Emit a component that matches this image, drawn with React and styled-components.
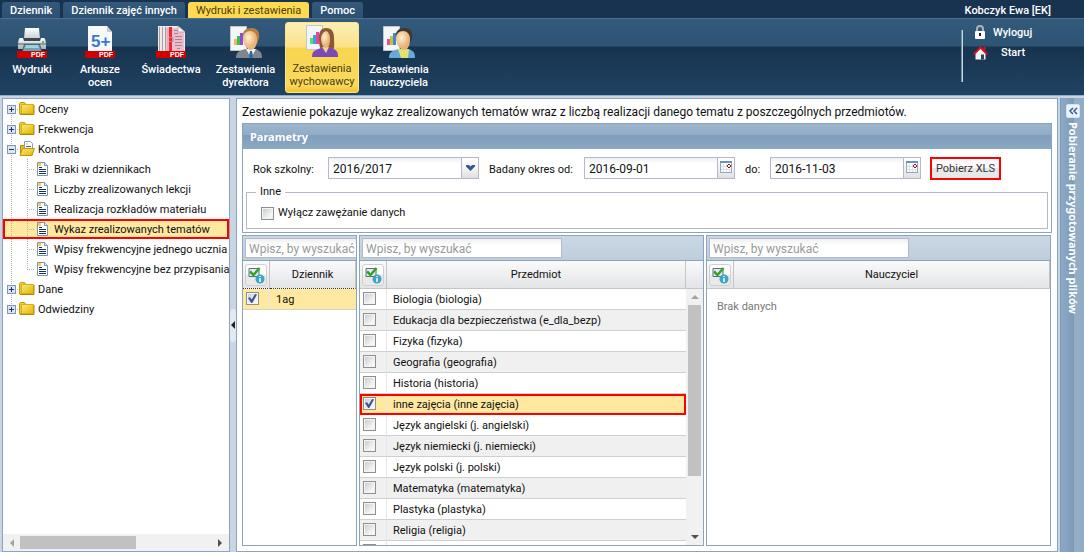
import React, { useState } from "react";
import styled, { createGlobalStyle, css } from "styled-components";

const GlobalStyle = createGlobalStyle`
  * { box-sizing: border-box; }
  body {
    margin: 0;
    background: #c9d5e3;
    color: #111;
    font: 11px/14px Tahoma, Roboto, "Noto Sans", sans-serif;
  }
  input, select, button { font: inherit; color: inherit; margin: 0; }
`;

const line = "#8ba4bf";
const selected = "#ffe8a0";
const titleFont = `Tahoma, "Noto Sans", sans-serif`;

const Page = styled.div`
  height: 100vh;
  display: flex;
  flex-direction: column;
`;

/* ---------- top bar ---------- */

const Header = styled.header`
  flex: none;
  background: #18334f;
  border-bottom: 1px solid #93abc3;
  color: #fff;
`;

const TopStrip = styled.div`
  height: 19px;
  display: flex;
  justify-content: space-between;
  align-items: flex-end;
  padding: 0 33px 0 2px;
  border-bottom: 1px solid #4d6f8d;
`;

const Tabs = styled.nav`
  display: flex;
  gap: 3px;
`;

const Tab = styled.button`
  height: 16px;
  padding: 1px 8px 0;
  border: 0;
  border-radius: 3px 3px 0 0;
  line-height: 15px;
  font-weight: ${(p) => (p.$active ? 400 : 500)};
  white-space: nowrap;
  background: ${(p) => (p.$active ? "#ffd94f" : "linear-gradient(#35597a, #2c5171)")};
  color: ${(p) => (p.$active ? "#4a3c10" : "#fff")};
`;

const User = styled.span`
  line-height: 15px;
  font-weight: 500;
`;

const Ribbon = styled.div`
  height: 76px;
  display: flex;
  justify-content: space-between;
  background: linear-gradient(#33597b 0, #2e5474 27px, #17334e 28px, #1f4363 76px);
`;

const Tools = styled.div`
  display: flex;
  gap: 4px;
  padding-top: 3px;
`;

const Tool = styled.button`
  width: ${(p) => p.$width}px;
  height: 71px;
  padding: 3px 0 0;
  border: 1px solid transparent;
  border-radius: 3px;
  background: none;
  display: flex;
  flex-direction: column;
  align-items: center;
  gap: 5px;
  font-weight: 500;
  line-height: 13px;
  white-space: pre-line;
  ${(p) =>
    p.$active &&
    css`
      padding-top: 2px;
      font-weight: 400;
      color: #4a3c10;
      border-color: #ffe48c;
      background: linear-gradient(#fbeeb4 0, #fbe28a 24px, #f8d54e 25px, #f9d95f 62px, #eebf1c 71px);
    `}
`;

const Session = styled.div`
  width: 123px;
  display: flex;
  align-items: flex-start;
  gap: 10px;
  padding-top: 4px;
`;

const Divider = styled.span`
  width: 2px;
  height: 52px;
  margin-top: 7px;
  background: linear-gradient(90deg, #7390a9 50%, #c6d4e0 50%);
`;

const SessionLinks = styled.div`
  display: flex;
  flex-direction: column;
`;

const SessionLink = styled.a`
  display: flex;
  align-items: center;
  gap: 6px;
  height: 20px;
  color: #fff;
  font-weight: 500;
  text-decoration: none;
  & + & { gap: 13px; }
`;

/* ---------- frame ---------- */

const Body = styled.div`
  flex: 1;
  min-height: 0;
  display: grid;
  grid-template-columns: 228px 6px minmax(0, 1fr) 26px;
  padding: 2px 0 0 2px;
`;

const Sidebar = styled.aside`
  display: flex;
  flex-direction: column;
  min-height: 0;
  overflow: hidden;
  background: #fff;
  border: 1px solid ${line};
`;

const Splitter = styled.div`
  display: flex;
  align-items: center;
`;

const Collapse = styled.button`
  width: 6px;
  height: 33px;
  padding: 0;
  border: 0;
  border-radius: 3px;
  background: #e2e9f1;
  display: flex;
  align-items: center;
  justify-content: center;
`;

const Main = styled.main`
  display: flex;
  flex-direction: column;
  min-height: 0;
  overflow: hidden;
  background: #fff;
  border: 1px solid ${line};
  padding: 5px;
`;

const Drawer = styled.aside`
  margin-left: 2px;
  display: flex;
  flex-direction: column;
  align-items: center;
  gap: 4px;
  padding-top: 6px;
  border-left: 1px solid #7f9dba;
  background: linear-gradient(90deg, #8ca9c4 0, #7d9bb9 13px, #95aec6 13px, #92acc5 100%);
`;

const DrawerButton = styled.button`
  width: 14px;
  height: 14px;
  padding: 0;
  border: 1px solid #d4e3f4;
  border-radius: 2px;
  background: #eaf2fb;
  display: flex;
  align-items: center;
  justify-content: center;
`;

const DrawerTitle = styled.span`
  writing-mode: vertical-rl;
  color: #fff;
  font-family: ${titleFont};
  font-weight: 700;
  white-space: nowrap;
`;

/* ---------- tree ---------- */

const Tree = styled.ul`
  flex: 1;
  min-height: 0;
  overflow: hidden;
  list-style: none;
  margin: 0;
  padding: 0;
`;

const TreeRow = styled.li`
  height: 20px;
  display: flex;
  align-items: center;
  white-space: nowrap;
  overflow: hidden;
  svg { flex: none; }
  ${(p) =>
    p.$selected &&
    css`
      background: ${selected};
      outline: 2px solid #f00;
      outline-offset: -2px;
    `}
`;

const TreeLabel = styled.span`
  padding: 2px 0 0 3px;
`;

/* ---------- scroll bars ---------- */

const HScroll = styled.div`
  flex: none;
  height: 17px;
  padding: 2px 6px;
  display: flex;
  align-items: stretch;
  background: #f1f1f1;
  svg { align-self: center; }
`;

const HTrack = styled.div`
  flex: 1;
  padding: 0 0 0 5px;
`;

const HThumb = styled.div`
  width: 59%;
  height: 13px;
  background: #c1c1c1;
`;

const VScroll = styled.div`
  flex: 1;
  min-height: 0;
  display: flex;
  flex-direction: column;
  align-items: center;
  padding: 4px 2px;
  background: #f1f1f1;
`;

const VTrack = styled.div`
  flex: 1;
  align-self: stretch;
  padding-top: 4px;
`;

const VThumb = styled.div`
  height: 75%;
  background: #c1c1c1;
`;

/* ---------- parameters ---------- */

const Intro = styled.p`
  flex: none;
  margin: 0;
  height: 19px;
  font-size: 12px;
  line-height: 16px;
  white-space: nowrap;
`;

const Panel = styled.section`
  flex: none;
  border: 1px solid ${line};
  background: #fff;
`;

const PanelTitle = styled.h2`
  margin: 0;
  height: 25px;
  padding-left: 7px;
  font-family: ${titleFont};
  font-size: 11px;
  line-height: 25px;
  font-weight: 700;
  color: #fff;
  background: linear-gradient(#9cb5cd 0, #91acc7 11px, #7f9dbb 11px, #8ba8c4 100%);
`;

const FormRow = styled.div`
  display: flex;
  padding: 8px 0 0 9px;
  height: 38px;
`;

const Label = styled.label`
  width: ${(p) => p.$width}px;
  padding-left: 1px;
  line-height: 26px;
  white-space: nowrap;
`;

const Field = styled.span`
  width: 151px;
  height: 22px;
  margin-right: 9px;
  display: flex;
  border: 1px solid #b5b8c8;
  background: linear-gradient(#eef0f1, #fff 6px);
`;

const control = css`
  flex: 1;
  min-width: 0;
  padding: 1px 4px 0;
  border: 0;
  border-radius: 0;
  outline: 0;
  background: none;
  font-size: 12px;
`;

const Select = styled.select`
  ${control}
  appearance: none;
`;

const DateInput = styled.input`
  ${control}
`;

const Trigger = styled.span`
  width: 17px;
  border-left: 1px solid #b5b8c8;
  background: linear-gradient(#fff 0, #f4f4f4 50%, #e0e0e2 100%);
  display: flex;
  align-items: center;
  justify-content: center;
`;

const TriggerButton = styled(Trigger).attrs({ as: "button", type: "button" })`
  align-items: flex-start;
  padding: 3px 0 0;
  border-width: 0 0 0 1px;
`;

const ExportButton = styled.button`
  width: 71px;
  height: 23px;
  padding: 0;
  border: 2px solid #f00;
  background: linear-gradient(#fafafa 45%, #e6e6e6 50%, #e9e9e9);
  color: #333;
  white-space: nowrap;
`;

const Fieldset = styled.fieldset`
  margin: -2px 3px 3px;
  padding: 6px 14px 7px;
  min-width: 0;
  border: 1px solid #b5b8c8;
`;

const Legend = styled.legend`
  margin-left: -5px;
  padding: 0 4px;
`;

const CheckLabel = styled.label`
  display: flex;
  align-items: center;
  gap: 4px;
  line-height: 16px;
`;

const Check = styled.input.attrs({ type: "checkbox" })`
  appearance: none;
  display: block;
  flex: none;
  width: 13px;
  height: 13px;
  border: 1px solid #8e8f8f;
  background: linear-gradient(135deg, #c9cfd5, #f6f6f6 80%) content-box;
  padding: 1px;
  box-shadow: inset 0 0 0 1px #f4f4f4;
  &:checked::before {
    content: "";
    display: block;
    width: 9px;
    height: 9px;
    background: #3c5297;
    clip-path: polygon(0 44%, 22% 36%, 42% 62%, 78% 0, 100% 6%, 48% 100%, 36% 100%);
  }
`;

/* ---------- lists ---------- */

const Lists = styled.div`
  flex: 1;
  min-height: 0;
  margin: 2px 1px 0 0;
  display: grid;
  grid-template-columns: 115px minmax(0, 1fr) minmax(0, 1fr);
  gap: 2px;
`;

const ListPanel = styled.section`
  min-height: 0;
  min-width: 0;
  display: flex;
  flex-direction: column;
  overflow: hidden;
  border: 1px solid ${line};
  background: #fff;
`;

const SearchBar = styled.div`
  flex: none;
  height: 25px;
  padding: 2px;
  overflow: hidden;
  border-bottom: 1px solid ${line};
  background: linear-gradient(#cbd7e4, #bfcedd);
`;

const Search = styled.input`
  display: block;
  width: 200px;
  height: 20px;
  padding: 1px 3px 0;
  border: 1px solid #b5b8c8;
  background: linear-gradient(#eef0f1, #fff 6px);
  font-size: 12px;
  &::placeholder { color: #999; }
`;

const ListBody = styled.div`
  flex: 1;
  min-height: 0;
  display: flex;
  overflow: hidden;
`;

const TableWrap = styled.div`
  flex: 1;
  min-width: 0;
  overflow: hidden;
`;

const Table = styled.table`
  width: 100%;
  table-layout: fixed;
  border-collapse: separate;
  border-spacing: 0;
`;

const headFill = css`
  height: 28px;
  border-bottom: 1px solid #c5c5c5;
  background: linear-gradient(#fafafa, #e3e4e6);
`;

const Th = styled.th`
  ${headFill}
  padding: 0;
  width: ${(p) => (p.$narrow ? "27px" : "auto")};
  border-right: 1px solid #c5c5c5;
  ${(p) => p.$focused && "border-bottom: 1px dotted #333;"}
  font-weight: 400;
  text-align: center;
`;

const ToggleAll = styled.button`
  display: block;
  width: 22px;
  height: 22px;
  margin: 0 auto;
  padding: 1px;
  border: 1px solid #d0d0d0;
  border-radius: 3px;
  background: linear-gradient(#fff 45%, #e9e9e9 50%);
`;

const Row = styled.tr`
  background: ${(p) => (p.$selected ? selected : p.$odd ? "#f0f0f0" : "#fff")};
  ${(p) =>
    p.$marked &&
    css`
      outline: 2px solid #f00;
      outline-offset: -2px;
    `}
`;

const Td = styled.td`
  height: 21px;
  padding: 2px 6px 0;
  border-bottom: 1px solid #d0d0d0;
  white-space: nowrap;
  overflow: hidden;
`;

const CheckCell = styled(Td)`
  padding: 0 3px 1px;
  border-right: 1px solid #e6e6e6;
`;

const ScrollSide = styled.div`
  flex: none;
  width: 17px;
  display: flex;
  flex-direction: column;
`;

const HeadCap = styled.div`
  ${headFill}
  flex: none;
`;

const Empty = styled.p`
  margin: 0;
  padding: 11px 10px;
  color: #777;
`;

/* ---------- drawings ---------- */

const PdfBand = () => (
  <g>
    <rect x="1" y="25" width="30" height="7" fill="#d00000" shapeRendering="crispEdges" />
    <text x="15" y="31" fontSize="7" fontWeight="700" fill="#fff" fontFamily="Liberation Sans, sans-serif">PDF</text>
  </g>
);

const PrinterIcon = () => (
  <svg width="32" height="32" viewBox="0 0 32 32">
    <defs>
      <linearGradient id="prn" x1="0" y1="0" x2="0" y2="1">
        <stop offset="0" stopColor="#ffffff" />
        <stop offset="1" stopColor="#a3b0ba" />
      </linearGradient>
      <linearGradient id="prn-paper" x1="0" y1="0" x2="0" y2="1">
        <stop offset="0" stopColor="#ffffff" />
        <stop offset="1" stopColor="#c9cfd3" />
      </linearGradient>
    </defs>
    <path d="M9 2h14l1 11H8z" fill="url(#prn-paper)" />
    <path d="M3 13q0-1 2-1h22q2 0 2 1l1 4v6H2v-6z" fill="url(#prn)" />
    <path d="M7 12h18l-1 3H8z" fill="#3d474f" />
    <path d="M2 17h28v2H2z" fill="#8d9aa4" />
    <path d="M8 18h16l2 7H6z" fill="#57656f" />
    <path d="M9 19h14l2 6H7z" fill="#62a9bb" />
    <path d="M10 19h12l1 3H9z" fill="#9fd3de" />
    <rect x="26" y="15" width="2" height="2" fill="#54c052" />
    <PdfBand />
  </svg>
);

const SheetIcon = () => (
  <svg width="32" height="32" viewBox="0 0 32 32">
    <path d="M4 0h19l5 6v26H4z" fill="#f7f8f9" />
    <path d="M23 0v6h5z" fill="#c3c9ce" />
    <text x="7" y="21" fontSize="17" fontWeight="700" fill="#3c78d0" fontFamily="Liberation Sans, sans-serif">5+</text>
    <PdfBand />
  </svg>
);

const CertificateIcon = () => (
  <svg width="32" height="32" viewBox="0 0 32 32">
    <path d="M3 0h20l7 6v26H3z" fill="#efeaea" />
    <path d="M4.500 1v24M7.500 1v24M10.500 1v24" stroke="#a9a0a2" />
    <path d="M11 2h13l5 5v19H11z" fill="#eebccc" />
    <path d="M13 1v24" stroke="#d9a3b4" />
    <path d="M15.500 1v24" stroke="#ec2a30" strokeWidth="3" />
    <path d="M19 4.500h4M19 7.500h4M20 10.500h7M20 13.500h7M20 16.500h7M20 19.500h7M22 22.500h3" stroke="#a58791" />
    <path d="M14 11.500h4v4h-4" fill="none" stroke="#c4808f" />
    <path d="M23 0v6h7z" fill="#fff" stroke="#c7a0ac" />
    <PdfBand />
  </svg>
);

const PersonIcon = ({ kind }) => {
  const look = {
    director: { hair: "#b5803f", coat: "#80868d", bars: ["#ffb052", "#30c648", "#9248e0"] },
    tutor: { hair: "#8a5935", coat: "#7b4bb5", bars: ["#52e070", "#4898e8", "#e3469f"] },
    teacher: { hair: "#41372c", coat: "#67a9da", bars: ["#e8509a", "#b5cc2c", "#4485dc"] },
  }[kind];
  return (
    <svg width="34" height="32" viewBox="0 0 34 32">
      <defs>
        <radialGradient id={`face-${kind}`} cx="0.4" cy="0.35">
          <stop offset="0" stopColor="#fff0d2" />
          <stop offset="1" stopColor="#e9b47a" />
        </radialGradient>
      </defs>
      <path d="M1.500 .5h16v24h-16z" fill="#f4f5f7" stroke="#c0c6cc" />
      <g shapeRendering="crispEdges">
        <rect x="5" y="13" width="3" height="6" fill={look.bars[0]} />
        <rect x="8" y="10" width="3" height="9" fill={look.bars[1]} />
        <rect x="11" y="7" width="3" height="12" fill={look.bars[2]} />
      </g>
      {kind === "tutor" && (
        <path d="M21 3c6 0 8 4 8 10 0 5 1 9-1 12H16c-2-4-2-8-2-13 0-5 2-9 7-9z" fill={look.hair} />
      )}
      <path d="M7 32c0-6 3-7 9-9h11c4 2 6 3 6 9z" fill={look.coat} />
      {kind === "director" && (
        <g>
          <path d="M17 23l5 9 5-9z" fill="#eef3f8" />
          <path d="M21 25h2l1 5-1 2h-2l-1-2z" fill="#2d67a8" />
        </g>
      )}
      {kind === "teacher" && <path d="M16 23l3 9h7l1-9z" fill="#dfe46c" />}
      {kind === "tutor" && <path d="M17 22l4 6 3-6z" fill="#f5cf9c" />}
      {kind !== "tutor" && <path d="M14 11c-1-6 3-9 9-9 5 0 8 4 7 10l-2 6H16z" fill={look.hair} />}
      <path
        d={
          kind === "tutor"
            ? "M16 14c0-4 2-7 5-8 3 1 4 4 4 8s-1 9-4 9-5-5-5-9z"
            : "M14 12c0-4 3-7 7-7s7 3 7 8c0 6-2 11-6 11s-8-6-8-12z"
        }
        fill={`url(#face-${kind})`}
      />
    </svg>
  );
};

const LockIcon = () => (
  <svg width="14" height="16" viewBox="0 0 14 16">
    <path d="M4 7V4q0-3 3-3t3 3v3" fill="none" stroke="#aab2b9" strokeWidth="2" />
    <rect x="2" y="6" width="10" height="8" rx="1" fill="#fff" />
    <rect x="6" y="8" width="2" height="3" fill="#222" />
  </svg>
);

const HomeIcon = () => (
  <svg width="15" height="14" viewBox="0 0 15 14">
    <path d="M2.500 7l5-5 5 5v6.500h-10z" fill="#f5f5f5" />
    <path d="M8 8.500h3v5H8z" fill="#345" />
    <path d="M.7 8.300L7.500 1.500l6.800 6.800M11.500 1v3" fill="none" stroke="#d9121c" strokeWidth="2" />
  </svg>
);

const TreeJoint = ({ box, top = true, bottom = true, through }) => (
  <svg width="16" height="20" viewBox="0 0 16 20" shapeRendering="crispEdges">
    {top && <path d="M8.500 0v10" stroke="#b4b4b4" strokeDasharray="1 1" />}
    {bottom && <path d="M8.500 10v10" stroke="#b4b4b4" strokeDasharray="1 1" />}
    {!through && <path d="M8 10.500h8" stroke="#b4b4b4" strokeDasharray="1 1" />}
    {box && (
      <g>
        <rect x="4.500" y="6.500" width="8" height="8" fill="#dde6f0" stroke="#7f97b5" />
        <path d={box === "plus" ? "M6 10.500h5M8.500 8v5" : "M6 10.500h5"} stroke="#1d3a6b" />
      </g>
    )}
  </svg>
);

const FolderIcon = ({ open }) => (
  <svg width="16" height="16" viewBox="0 0 16 16">
    <defs>
      <linearGradient id="folder" x1="0" y1="0" x2="1" y2="1">
        <stop offset="0" stopColor="#fbe97a" />
        <stop offset="1" stopColor="#e6b400" />
      </linearGradient>
    </defs>
    {open ? (
      <g>
        <path d="M1.500 14V4.500h4l1 1.500h7V14z" fill="#e9bd20" stroke="#b08a10" />
        <path d="M5.500 8V.5h6l2 2V8z" fill="#fff" stroke="#8ba0b8" />
        <path d="M7 3h2" stroke="#f0c030" />
        <path d="M7 5.500h5" stroke="#44628a" />
        <path d="M3.500 7.500h12L13 14.500H1z" fill="url(#folder)" stroke="#c29a08" />
      </g>
    ) : (
      <g>
        <path d="M.5 13V2.500l1-1h4l1.500 2v10z" fill="#f0cc3c" stroke="#c09a10" />
        <path d="M2.500 3.500h12v9h-12z" fill="url(#folder)" stroke="#d9b010" />
        <path d="M1 13.500h14V4" fill="none" stroke="#b08808" />
      </g>
    )}
  </svg>
);

const FileIcon = () => (
  <svg width="16" height="16" viewBox="0 0 16 16">
    <path d="M2.500 1.500h7l3 3v10h-10z" fill="#fff" stroke="#7a93b4" />
    <path d="M9.500 1.500v3h3" fill="#dfe8f2" stroke="#7a93b4" />
    <path d="M3 2h3v3H3z" fill="#f5cf55" />
    <path d="M4 6.500h3M4 8.500h7M4 10.500h7M4 12.500h7" stroke="#16324f" />
  </svg>
);

const Arrow = ({ dir, color }) => {
  const d = { left: "M5 0v8L1 4z", right: "M1 0v8l4-4z", up: "M0 6h8L4 2z", down: "M0 2h8L4 6z" }[dir];
  const side = dir === "left" || dir === "right";
  return (
    <svg width={side ? 6 : 8} height="8" viewBox={side ? "0 0 6 8" : "0 0 8 8"}>
      <path d={d} fill={color} />
    </svg>
  );
};

const Chevron = () => (
  <svg width="9" height="6" viewBox="0 0 9 6">
    <path d="M0 0h3l1.500 1.500L6 0h3v1.500L4.500 6 0 1.500z" fill="#3a5591" />
  </svg>
);

const CalendarIcon = () => (
  <svg width="12" height="12" viewBox="0 0 12 12" shapeRendering="crispEdges">
    <path d="M.5.5h11v11H.5z" fill="#fff" stroke="#8fa8cb" />
    <path d="M0 0h12v2H0z" fill="#6f8fbd" />
    <path d="M3.500 3v8M6.500 3v8M9.500 8v3M1 5.500h10M1 8.500h10" stroke="#dcdfe6" />
    <path d="M8 3.500h2M8 6.500h2M7.500 4v2M10.500 4v2" fill="none" stroke="#8e1414" />
  </svg>
);

const CheckInfoIcon = () => (
  <svg width="18" height="18" viewBox="0 0 18 18">
    <path d="M2 2.500h10v8H2z" fill="#e6eaf0" stroke="#5a6b86" />
    <path d="M3 5.500l3.500 3.500 6-7" fill="none" stroke="#33a51d" strokeWidth="2.500" />
    <circle cx="13" cy="13" r="4.500" fill="#3aa5c4" />
    <path d="M13 12v4M13 10v1" fill="none" stroke="#fff" strokeWidth="1.500" />
  </svg>
);

/* ---------- data ---------- */

const tabs = ["Dziennik", "Dziennik zajęć innych", "Wydruki i zestawienia", "Pomoc"];

const tools = [
  { label: "Wydruki", width: 64, icon: <PrinterIcon /> },
  { label: "Arkusze\nocen", width: 64, icon: <SheetIcon /> },
  { label: "Świadectwa", width: 70, icon: <CertificateIcon /> },
  { label: "Zestawienia\ndyrektora", width: 71, icon: <PersonIcon kind="director" /> },
  { label: "Zestawienia\nwychowawcy", width: 74, icon: <PersonIcon kind="tutor" />, active: true },
  { label: "Zestawienia\nnauczyciela", width: 72, icon: <PersonIcon kind="teacher" /> },
];

const reports = [
  "Braki w dziennikach",
  "Liczby zrealizowanych lekcji",
  "Realizacja rozkładów materiału",
  "Wykaz zrealizowanych tematów",
  "Wpisy frekwencyjne jednego ucznia",
  "Wpisy frekwencyjne bez przypisania",
];

const subjects = [
  "Biologia (biologia)",
  "Edukacja dla bezpieczeństwa (e_dla_bezp)",
  "Fizyka (fizyka)",
  "Geografia (geografia)",
  "Historia (historia)",
  "inne zajęcia (inne zajęcia)",
  "Język angielski (j. angielski)",
  "Język niemiecki (j. niemiecki)",
  "Język polski (j. polski)",
  "Matematyka (matematyka)",
  "Plastyka (plastyka)",
  "Religia (religia)",
  "",
];

/* ---------- parts ---------- */

function Folder({ label, open, first, last }) {
  return (
    <TreeRow>
      <TreeJoint box={open ? "minus" : "plus"} top={!first} bottom={!last} />
      <FolderIcon open={open} />
      <TreeLabel>{label}</TreeLabel>
    </TreeRow>
  );
}

function DateField({ id, value }) {
  return (
    <Field>
      <DateInput id={id} defaultValue={value} />
      <TriggerButton aria-label="Kalendarz">
        <CalendarIcon />
      </TriggerButton>
    </Field>
  );
}

function List({ title, rows, initial = [], marked, scroll, focused, empty }) {
  const [picked, setPicked] = useState(initial);
  const toggle = (name) =>
    setPicked(picked.includes(name) ? picked.filter((n) => n !== name) : [...picked, name]);
  return (
    <ListPanel>
      <SearchBar>
        <Search placeholder="Wpisz, by wyszukać" aria-label={title} />
      </SearchBar>
      <ListBody>
        <TableWrap>
          <Table>
            <thead>
              <tr>
                <Th $narrow $focused={focused}>
                  <ToggleAll aria-label="Zaznacz">
                    <CheckInfoIcon />
                  </ToggleAll>
                </Th>
                <Th $focused={focused}>{title}</Th>
              </tr>
            </thead>
            <tbody>
              {rows.map((name, i) => (
                <Row key={name} $odd={i % 2 === 1} $selected={picked.includes(name)} $marked={name === marked}>
                  <CheckCell>
                    <Check aria-label={name} checked={picked.includes(name)} onChange={() => toggle(name)} />
                  </CheckCell>
                  <Td>{name}</Td>
                </Row>
              ))}
            </tbody>
          </Table>
          {empty && <Empty>{empty}</Empty>}
        </TableWrap>
        {scroll && (
          <ScrollSide>
            <HeadCap />
            <VScroll>
              <Arrow dir="up" color="#a3a3a3" />
              <VTrack>
                <VThumb />
              </VTrack>
              <Arrow dir="down" color="#505050" />
            </VScroll>
          </ScrollSide>
        )}
      </ListBody>
    </ListPanel>
  );
}

export default function App() {
  return (
    <Page>
      <GlobalStyle />
      <Header>
        <TopStrip>
          <Tabs>
            {tabs.map((t) => (
              <Tab key={t} $active={t === "Wydruki i zestawienia"}>{t}</Tab>
            ))}
          </Tabs>
          <User>Kobczyk Ewa [EK]</User>
        </TopStrip>
        <Ribbon>
          <Tools>
            {tools.map((t) => (
              <Tool key={t.label} $width={t.width} $active={t.active}>
                {t.icon}
                {t.label}
              </Tool>
            ))}
          </Tools>
          <Session>
            <Divider />
            <SessionLinks>
              <SessionLink href="#wyloguj"><LockIcon />Wyloguj</SessionLink>
              <SessionLink href="#start"><HomeIcon />Start</SessionLink>
            </SessionLinks>
          </Session>
        </Ribbon>
      </Header>

      <Body>
        <Sidebar>
          <Tree>
            <Folder label="Oceny" first />
            <Folder label="Frekwencja" />
            <Folder label="Kontrola" open />
            {reports.map((r, i) => (
              <TreeRow key={r} $selected={i === 3}>
                <TreeJoint through />
                <TreeJoint bottom={i < reports.length - 1} />
                <FileIcon />
                <TreeLabel>{r}</TreeLabel>
              </TreeRow>
            ))}
            <Folder label="Dane" />
            <Folder label="Odwiedziny" last />
          </Tree>
          <HScroll>
            <Arrow dir="left" color="#a3a3a3" />
            <HTrack>
              <HThumb />
            </HTrack>
            <Arrow dir="right" color="#505050" />
          </HScroll>
        </Sidebar>

        <Splitter>
          <Collapse aria-label="Zwiń">
            <Arrow dir="left" color="#222" />
          </Collapse>
        </Splitter>

        <Main>
          <Intro>
            Zestawienie pokazuje wykaz zrealizowanych tematów wraz z liczbą realizacji danego tematu z poszczególnych przedmiotów.
          </Intro>
          <Panel>
            <PanelTitle>Parametry</PanelTitle>
            <FormRow>
              <Label htmlFor="year" $width={76}>Rok szkolny:</Label>
              <Field>
                <Select id="year" defaultValue="2016/2017">
                  <option>2016/2017</option>
                </Select>
                <Trigger><Chevron /></Trigger>
              </Field>
              <Label htmlFor="from" $width={96}>Badany okres od:</Label>
              <DateField id="from" value="2016-09-01" />
              <Label htmlFor="to" $width={26}>do:</Label>
              <DateField id="to" value="2016-11-03" />
              <ExportButton>Pobierz XLS</ExportButton>
            </FormRow>
            <Fieldset>
              <Legend>Inne</Legend>
              <CheckLabel>
                <Check />
                Wyłącz zawężanie danych
              </CheckLabel>
            </Fieldset>
          </Panel>
          <Lists>
            <List title="Dziennik" rows={["1ag"]} initial={["1ag"]} focused />
            <List
              title="Przedmiot"
              rows={subjects}
              initial={["inne zajęcia (inne zajęcia)"]}
              marked="inne zajęcia (inne zajęcia)"
              scroll
            />
            <List title="Nauczyciel" rows={[]} empty="Brak danych" />
          </Lists>
        </Main>

        <Drawer>
          <DrawerButton aria-label="Rozwiń">
            <svg width="10" height="8" viewBox="0 0 10 8">
              <path d="M5 1L2 4l3 3M9 1L6 4l3 3" fill="none" stroke="#2f6196" strokeWidth="1.500" />
            </svg>
          </DrawerButton>
          <DrawerTitle>Pobieranie przygotowanych plików</DrawerTitle>
        </Drawer>
      </Body>
    </Page>
  );
}
